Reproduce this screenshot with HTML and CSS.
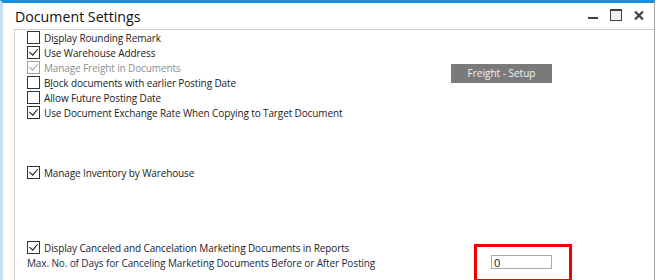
FILE: index.html
```html
<!DOCTYPE html>
<html lang="en">
<head>
  <meta charset="UTF-8" />
  <title>Document Settings</title>
  <link rel="stylesheet" href="styles.css">
</head>
<body>
  <div class="window">
    <header class="titlebar">
      <h1 class="title">Document Settings</h1>
      <div class="controls">
        <svg class="ctl-min" width="10" height="3" viewBox="0 0 10 3"><rect x="0" y="0" width="10" height="2" fill="#404040"/></svg>
        <svg class="ctl-max" width="12" height="12" viewBox="0 0 12 12"><rect x="0.5" y="0.5" width="11" height="11" fill="#f0f0f0" stroke="#404040"/><rect x="0" y="0" width="12" height="2" fill="#404040"/></svg>
        <svg class="ctl-close" width="10" height="9" viewBox="0 0 10 9"><path d="M1 0.5 L9 8.5 M9 0.5 L1 8.5" stroke="#404040" stroke-width="2.2"/></svg>
      </div>
    </header>

    <div class="panel">
      <div class="top">
        <ul class="checks">
          <li><span class="box"></span><span class="label">Di<u>s</u>play Rounding Remark</span></li>
          <li><span class="box checked"></span><span class="label">Use Warehouse Address</span></li>
          <li class="disabled"><span class="box checked"></span><span class="label">Manage Freight in Documents</span></li>
          <li><span class="box"></span><span class="label">B<u>l</u>ock documents with earlier Posting Date</span></li>
          <li><span class="box"></span><span class="label">Allow Future Posting Date</span></li>
          <li><span class="box checked"></span><span class="label">Use Document Exchange Rate When Copying to Target Document</span></li>
        </ul>
        <div class="side">
          <button class="btn">Frei<u>g</u>ht - Setup</button>
        </div>
      </div>

      <ul class="checks inventory">
        <li><span class="box checked"></span><span class="label">Manage Inventory by Warehouse</span></li>
      </ul>

      <ul class="checks bottom">
        <li><span class="box checked"></span><span class="label">Display Canceled and Cancelation Marketing Documents in Reports</span></li>
      </ul>
      <div class="field">
        <span class="field-label">Max. No. of Days for Canceling Marketing Documents Before or After Posting</span>
        <span class="highlight"><input class="num" type="text" value="0"></span>
      </div>
    </div>
  </div>
</body>
</html>
```

FILE: styles.css
```css
* {
  box-sizing: border-box;
}
body {
  margin: 0;
  font-family: "Open Sans", "Noto Sans", sans-serif;
  background: #fff;
  color: #1b1b1b;
}
.window {
  width: 655px;
  height: 280px;
  border-top: 3px solid #1b8fdd;
  border-left: 3px solid #c6dff0;
  border-right: 1px solid #a8a8a8;
  display: flex;
  flex-direction: column;
  overflow: hidden;
}
.titlebar {
  height: 26px;
  display: flex;
  align-items: flex-start;
  justify-content: space-between;
}
.title {
  margin: 4px 0 0 12px;
  font-size: 14.2px;
  font-weight: normal;
  line-height: 20px;
  color: #111;
}
.controls {
  display: flex;
  align-items: flex-start;
  margin: 6px 10px 0 0;
}
.ctl-min {
  margin: 8px 12px 0 0;
}
.ctl-max {
  margin: 0 12px 0 0;
}
.ctl-close {
  margin-top: 2px;
}
.panel {
  flex: 1;
  margin-left: 11px;
  border-left: 1px solid #cfcfcf;
  border-top: 1px solid #cfcfcf;
}
.top {
  display: flex;
}
.checks {
  list-style: none;
  margin: 0;
  padding: 0 0 0 12px;
  width: 436px;
}
.checks li {
  height: 15px;
  display: flex;
  align-items: center;
  font-size: 10px;
  letter-spacing: -0.12px;
  white-space: nowrap;
}
.box {
  width: 13px;
  height: 13px;
  border: 1px solid #333;
  background: #fff;
  margin-right: 4px;
  position: relative;
  flex: none;
}
.box.checked::after {
  content: "";
  position: absolute;
  left: 3px;
  top: 0px;
  width: 4px;
  height: 7px;
  border: solid #111;
  border-width: 0 1.6px 1.6px 0;
  transform: rotate(40deg);
}
.disabled .box {
  border-color: #a0a0a0;
}
.disabled .box.checked::after {
  border-color: #a0a0a0;
}
.disabled .label {
  color: #8e8e8e;
}
u {
  text-decoration: underline;
}
.side {
  padding-top: 30px;
}
.btn {
  width: 101px;
  height: 19px;
  border: none;
  background: #7a7a7a;
  color: #f4f4f4;
  font-family: inherit;
  font-size: 10px;
  padding: 0;
}
.inventory {
  margin-top: 45px;
}
.bottom {
  margin-top: 60px;
}
.field {
  height: 15px;
  display: flex;
  align-items: center;
  padding-left: 12px;
  font-size: 10px;
  letter-spacing: -0.12px;
}
.field-label {
  width: 464px;
  color: #1b2a44;
}
.highlight {
  position: relative;
  display: inline-block;
}
.highlight::after {
  content: "";
  position: absolute;
  left: -17px;
  top: -11px;
  width: 92px;
  height: 32px;
  border: 3px solid #f20000;
}
.num {
  width: 61px;
  height: 14px;
  border: 1px solid #aaa;
  padding: 0 0 0 2px;
  font-family: inherit;
  font-size: 11px;
  color: #111;
}
```
